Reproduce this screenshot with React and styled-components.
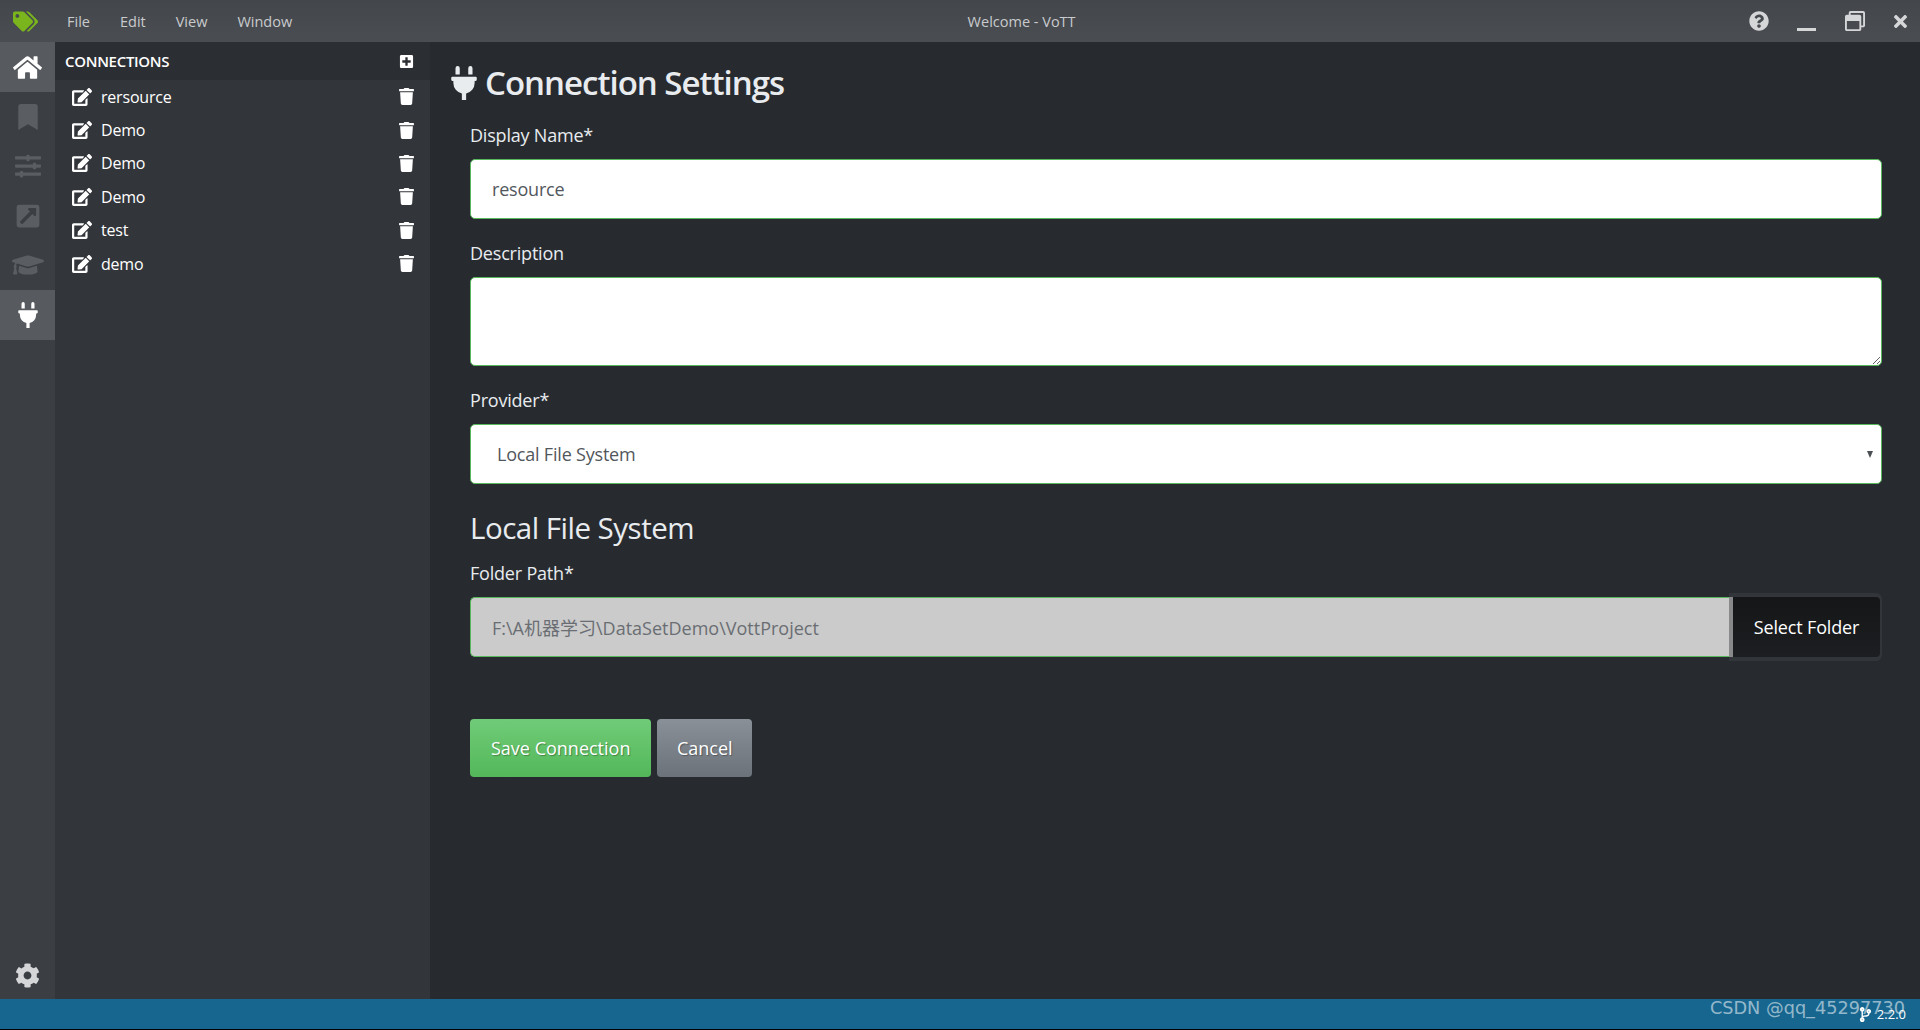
import React from "react";
import styled, { createGlobalStyle } from "styled-components";
import {
  FaBookmark,
  FaCodeBranch,
  FaCog,
  FaEdit,
  FaExternalLinkSquareAlt,
  FaGraduationCap,
  FaHome,
  FaPlug,
  FaPlusSquare,
  FaQuestionCircle,
  FaRegWindowRestore,
  FaSlidersH,
  FaTags,
  FaTimes,
  FaTrash,
} from "react-icons/fa";

const FONT = `"Open Sans", "Noto Sans CJK SC", sans-serif`;

const GlobalStyle = createGlobalStyle`
  * { box-sizing: border-box; }
  html, body { margin: 0; height: 100%; overflow: hidden; }
  body { font-family: ${FONT}; background: #272b30; }
`;

const Page = styled.div`
  height: 100vh;
  display: flex;
  flex-direction: column;
  position: relative;
`;

const TitleBar = styled.header`
  height: 42px;
  flex: none;
  display: flex;
  align-items: center;
  background: linear-gradient(#43464b, #4a4d52);
  color: #c9cbcd;
  font-size: 14.5px;
`;

const Logo = styled.div`
  width: 55px;
  padding: 0 0 0 13px;
  display: flex;
  color: #7ab51d;
  font-size: 25px;
`;

const Menu = styled.nav`
  display: flex;
  gap: 30px;
  padding: 0 16px 0 12px;
`;

const WindowTitle = styled.div`
  flex: 1;
  text-align: center;
`;

const WindowControls = styled.div`
  display: flex;
  align-items: center;
  color: #d4d6d8;
`;

const Control = styled.span`
  display: flex;
  justify-content: center;
  width: ${(p) => p.$width}px;
  font-size: ${(p) => p.$size}px;
`;

const MinimizeBar = styled.span`
  width: 19px;
  height: 3px;
  margin-top: 17px;
  background: #d4d6d8;
`;

const Body = styled.div`
  flex: 1;
  display: flex;
  min-height: 0;
`;

const Sidebar = styled.aside`
  width: 55px;
  flex: none;
  display: flex;
  flex-direction: column;
  background: #3b3e43;
`;

const SideItem = styled.div`
  height: ${(p) => (p.$active ? 50 : 49.5)}px;
  display: flex;
  align-items: center;
  justify-content: center;
  font-size: ${(p) => p.$size || 26}px;
  color: ${(p) => (p.$active ? "#fff" : "#5a5e63")};
  background: ${(p) => (p.$active ? "#575a5f" : "transparent")};
`;

const SideFooter = styled.div`
  margin-top: auto;
  height: 36px;
  display: flex;
  justify-content: center;
  font-size: 25px;
  color: #d4d6d8;
`;

const ConnectionsPanel = styled.section`
  width: 375px;
  flex: none;
  background: #32353a;
  color: #fff;
`;

const PanelHeader = styled.div`
  height: 38px;
  display: flex;
  align-items: center;
  justify-content: space-between;
  padding: 0 16px 0 10px;
  background: #2b2e33;
  font-size: 15px;
  font-weight: 600;
  letter-spacing: -0.3px;

  svg { font-size: 15px; }
`;

const ConnectionList = styled.ul`
  list-style: none;
  margin: 0;
  padding: 0;
`;

const ConnectionRow = styled.li`
  height: 33.4px;
  display: flex;
  align-items: center;
  padding: 0 15px 0 17px;
  font-size: 16px;

  > svg:first-child { font-size: 20px; margin-right: 9px; }
  > svg:last-child { font-size: 17px; }
`;

const ConnectionName = styled.span`
  flex: 1;
  letter-spacing: -0.2px;
`;

const Main = styled.main`
  flex: 1;
  padding: 17px 38px 0 17px;
  color: #e9ecef;
`;

const Heading = styled.h1`
  margin: 0 0 17px;
  height: 47px;
  display: flex;
  align-items: center;
  gap: 4px;
  font-size: 33px;
  font-weight: 600;
  letter-spacing: -1px;

  svg { font-size: 34px; }
`;

const Form = styled.form`
  padding-left: 23px;
`;

const Label = styled.label`
  display: block;
  height: 24px;
  line-height: 24px;
  margin-bottom: 12px;
  font-size: 18px;
  letter-spacing: -0.2px;
`;

const fieldStyles = `
  display: block;
  width: 100%;
  border: 1px solid #58b85c;
  border-radius: 5px;
  background: #fff;
  color: #52575c;
  font-family: ${FONT};
  font-size: 18px;
  letter-spacing: -0.2px;
  outline: none;
`;

const Field = styled.div`
  margin-bottom: 22px;
`;

const TextInput = styled.input`
  ${fieldStyles}
  height: 60px;
  padding: 0 21px;
`;

const TextArea = styled.textarea`
  ${fieldStyles}
  height: 89px;
  padding: 10px 21px;
  resize: vertical;
`;

const SelectBox = styled.div`
  ${fieldStyles}
  height: 60px;
  padding: 0 8px 0 26px;
  display: flex;
  align-items: center;
  justify-content: space-between;
`;

const Caret = styled.span`
  width: 0;
  height: 0;
  border-left: 3.5px solid transparent;
  border-right: 3.5px solid transparent;
  border-top: 7px solid #4c4f53;
`;

const SubHeading = styled.h2`
  margin: 0 0 11px;
  height: 44px;
  line-height: 44px;
  font-size: 29.5px;
  font-weight: 400;
  letter-spacing: -0.5px;
`;

const InputGroup = styled.div`
  display: flex;
  height: 60px;
`;

const PathInput = styled.input`
  ${fieldStyles}
  flex: 1;
  width: auto;
  height: 60px;
  padding: 0 21px;
  background: #cbcbcb;
  border-right: 0;
  border-radius: 5px 0 0 5px;
  color: #6a6e73;
  letter-spacing: 0;
`;

const FolderFrame = styled.div`
  width: 153px;
  height: 68px;
  margin: -4px 0;
  padding: 4px 2px 4px 4px;
  background: linear-gradient(#87898b, #87898b) 0 4px / 4px 60px no-repeat, #32353a;
  border-radius: 0 6px 6px 0;
`;

const FolderButton = styled.button`
  width: 100%;
  height: 100%;
  padding: 0;
  border: 0;
  border-radius: 0 4px 4px 0;
  background: linear-gradient(#141617, #1c1e21);
  color: #fff;
  font-family: ${FONT};
  font-size: 18px;
  letter-spacing: -0.15px;
`;

const Actions = styled.div`
  display: flex;
  gap: 6px;
  margin-top: 62px;
`;

const ActionButton = styled.button`
  height: 58px;
  padding: 0 ${(p) => (p.$primary ? 21 : 19.5)}px;
  border: 0;
  border-radius: 4px;
  color: #fff;
  font-family: ${FONT};
  font-size: 18px;
  text-shadow: 1px 1px 1px rgba(0, 0, 0, 0.3);
  background: ${(p) =>
    p.$primary
      ? "linear-gradient(#70cb78, #53b85a)"
      : "linear-gradient(#8a9097, #6c7279)"};
`;

const StatusBar = styled.footer`
  height: 31px;
  flex: none;
  display: flex;
  align-items: center;
  justify-content: flex-end;
  gap: 4px;
  padding-right: 14px;
  background: #17668f;
  border-bottom: 1px solid #000;
  color: #fff;
  font-size: 13px;
  svg { font-size: 15px; }
`;

const Watermark = styled.div`
  position: absolute;
  right: 15px;
  bottom: 12px;
  font-family: "DejaVu Sans", sans-serif;
  font-size: 17.7px;
  color: rgba(255, 255, 255, 0.55);
`;

const connections = ["rersource", "Demo", "Demo", "Demo", "test", "demo"];

export default function App() {
  return (
    <Page>
      <GlobalStyle />
      <TitleBar>
        <Logo>
          <FaTags />
        </Logo>
        <Menu>
          <span>File</span>
          <span>Edit</span>
          <span>View</span>
          <span>Window</span>
        </Menu>
        <WindowTitle>Welcome - VoTT</WindowTitle>
        <WindowControls>
          <Control $width={48} $size={20}>
            <FaQuestionCircle />
          </Control>
          <Control $width={47} $size={20}>
            <MinimizeBar />
          </Control>
          <Control $width={50} $size={20}>
            <FaRegWindowRestore />
          </Control>
          <Control $width={40} $size={19}>
            <FaTimes />
          </Control>
        </WindowControls>
      </TitleBar>
      <Body>
        <Sidebar>
          <SideItem $active $size={29}>
            <FaHome />
          </SideItem>
          <SideItem>
            <FaBookmark />
          </SideItem>
          <SideItem>
            <FaSlidersH />
          </SideItem>
          <SideItem>
            <FaExternalLinkSquareAlt />
          </SideItem>
          <SideItem $size={32}>
            <FaGraduationCap />
          </SideItem>
          <SideItem $active>
            <FaPlug />
          </SideItem>
          <SideFooter>
            <FaCog />
          </SideFooter>
        </Sidebar>
        <ConnectionsPanel>
          <PanelHeader>
            CONNECTIONS
            <FaPlusSquare />
          </PanelHeader>
          <ConnectionList>
            {connections.map((name, i) => (
              <ConnectionRow key={i}>
                <FaEdit />
                <ConnectionName>{name}</ConnectionName>
                <FaTrash />
              </ConnectionRow>
            ))}
          </ConnectionList>
        </ConnectionsPanel>
        <Main>
          <Heading>
            <FaPlug />
            Connection Settings
          </Heading>
          <Form>
            <Field>
              <Label>Display Name*</Label>
              <TextInput defaultValue="resource" />
            </Field>
            <Field>
              <Label>Description</Label>
              <TextArea />
            </Field>
            <Field>
              <Label>Provider*</Label>
              <SelectBox>
                Local File System
                <Caret />
              </SelectBox>
            </Field>
            <SubHeading>Local File System</SubHeading>
            <Label>Folder Path*</Label>
            <InputGroup>
              <PathInput readOnly value="F:\A机器学习\DataSetDemo\VottProject" />
              <FolderFrame>
                <FolderButton type="button">Select Folder</FolderButton>
              </FolderFrame>
            </InputGroup>
            <Actions>
              <ActionButton type="button" $primary>
                Save Connection
              </ActionButton>
              <ActionButton type="button">Cancel</ActionButton>
            </Actions>
          </Form>
        </Main>
      </Body>
      <StatusBar>
        <FaCodeBranch />
        2.2.0
      </StatusBar>
      <Watermark>CSDN @qq_45297730</Watermark>
    </Page>
  );
}
